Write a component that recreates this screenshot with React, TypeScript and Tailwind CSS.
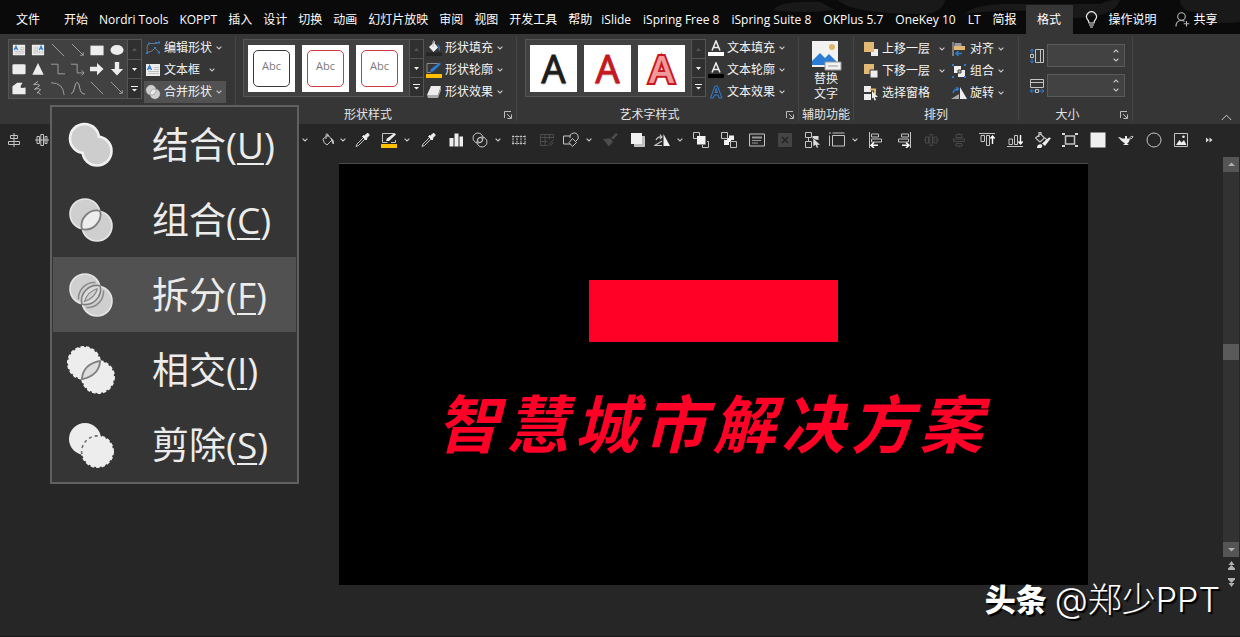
import React from "react";

type Kids = { children?: React.ReactNode };

const Svg = ({ s = 16, children }: Kids & { s?: number }) => (
  <svg width={s} height={s} viewBox="0 0 16 16" fill="none" stroke="#c4c4c4" strokeWidth="1" aria-hidden="true" className="shrink-0">
    {children}
  </svg>
);

const Chevron = () => (
  <svg width="6" height="4" viewBox="0 0 6 4" fill="none" stroke="#c8c8c8" strokeWidth="1.1" aria-hidden="true" className="shrink-0">
    <path d="M.6.6 3 3 5.400.6" />
  </svg>
);

const LENS = "M34.2 15.8A15.5 15.5 0 0 1 15.8 34.2A15.5 15.5 0 0 1 34.2 15.800";

const MergeIcon = ({ kind, size }: { kind: string; size: number }) => (
  <svg width={size} height={size} viewBox="0 0 50 50" fill="none" aria-hidden="true" className="shrink-0">
    {kind === "union" && (
      <>
        <g fill="#f0f0f0"><circle cx="18.500" cy="18.500" r="15.800" /><circle cx="31" cy="31" r="15.800" /></g>
        <g fill="#cdcdcd"><circle cx="18.500" cy="18.500" r="13.200" /><circle cx="31" cy="31" r="13.200" /></g>
      </>
    )}
    {kind === "combine" && (
      <>
        <g fill="#cfcfcf" stroke="#e6e6e6" strokeWidth="1.600"><circle cx="19" cy="19" r="15" /><circle cx="31" cy="31" r="15" /></g>
        <path d={LENS} fill="#ededed" stroke="#7e7e7e" strokeWidth="1.800" />
      </>
    )}
    {kind === "fragment" && (
      <>
        <g fill="#cfcfcf" stroke="#e6e6e6" strokeWidth="1.600"><circle cx="19" cy="19" r="15" /><circle cx="31" cy="31" r="15" /></g>
        <path d={LENS} fill="#dcdcdc" stroke="#7e7e7e" strokeWidth="1.600" />
        <path d="M29.500 12.500A16 16 0 0 0 12.500 29.500M37.500 20.500A16 16 0 0 1 20.500 37.500" stroke="#8a8a8a" strokeWidth="1.500" />
        <path d="M31.500 18.500Q29 28 18.500 31.500Q21 22 31.500 18.500" fill="#cfcfcf" stroke="#8a8a8a" strokeWidth="1.200" />
      </>
    )}
    {kind === "intersect" && (
      <>
        <g fill="#ededed" stroke="#ededed" strokeWidth="2" strokeDasharray="3.500 2"><circle cx="18" cy="18" r="16" /><circle cx="32" cy="32" r="16" /></g>
        <path d="M34.200 15.800Q33 31 15.800 34.200Q17 19 34.200 15.800" fill="#dcdcdc" stroke="#7e7e7e" strokeWidth="1.800" />
      </>
    )}
    {kind === "subtract" && (
      <>
        <circle cx="19" cy="19" r="16" fill="#ededed" />
        <circle cx="31.500" cy="31.500" r="15.500" fill="#ededed" stroke="#ededed" strokeWidth="2" strokeDasharray="3.500 2" />
        <path d="M15.800 34A16 16 0 0 1 34 16" stroke="#6e6e6e" strokeWidth="1.600" strokeDasharray="3 3" />
      </>
    )}
  </svg>
);

const Bucket = () => (
  <>
    <path d="m3 7 5-4 4 5-5 5Q3 11 3 7ZM6 7V2.500q1-1.500 2 0V5" />
    <path d="M11 6.500q3 1 2.500 5.500-1.500-1-1.500-3.500Z" fill="#e8e8e8" />
  </>
);

const Dropper = () => (
  <>
    <path d="M9.500 5.500 3 12l-1 2.500L4.500 13.500 11 7" />
    <path d="m8.500 4.500 3.500 3.500 1-1-.500-1L15 3.500q.500-2-2-2L10.500 4l-1-.500Z" fill="#eee" stroke="#eee" />
  </>
);

const TB: Record<string, React.ReactNode> = {
  alignCenter: <path d="M8 1v14M4.500 3.500h7v3h-7zM2.500 9.500h11v3h-11z" />,
  distribute: <path d="M1 8h14M3 4.500h2.500v7H3zM6.800 2.500h2.700v11H6.800zM11 4.500h2v7h-2z" />,
  bucket: <Bucket />,
  dropper: <Dropper />,
  outline: (
    <>
      <path d="M13 1.500H1.500v9h5M14.500 8v2.500H10" />
      <path d="m5 9 1-2.500L13.500 1 15 2.500 8 9Z" fill="#ededed" stroke="none" />
      <path d="M0 12h16v4H0z" fill="#ffc000" stroke="none" />
    </>
  ),
  bars: <path d="M1.500 6h4v8.500h-4zM6.500 1.500h4v13h-4zM11.500 4.500h3.500v10h-3.500z" fill="#ededed" stroke="none" />,
  circles: (
    <>
      <circle cx="6" cy="6" r="5" /><circle cx="10" cy="10" r="5" /><circle cx="8" cy="8" r="2.500" />
    </>
  ),
  grid: <path d="M2 3.500v9M6 3.500v9M10 3.500v9M14 3.500v9M1 4.500h14M1 11.500h14" strokeDasharray="2 .7" />,
  table: <path stroke="#4c4c4c" d="M1.500 2.500h13v4M1.500 2.500v11h7M1.500 5.500h13M1.500 9.500h7M6 2.500v11M10.500 2.500v5M9 13.500l5.500-6M11 14l3.500-4" />,
  shapes: <path d="M7.500 4H.5v8H7M7 6a4.200 4.200 0 1 1 6 3M9.500 6.500 13.500 10.500 9.500 14.500 6 10.500Z" />,
  brush: <path d="m1 7 6 7.500 4-5-3-3zM9 6l5-5L16 2.500l-5 5z" fill="#4d4d4d" stroke="none" />,
  copy: (
    <>
      <path d="M4.500 12v2.500h10v-10H12" fill="#bdbdbd" /><path d="M1 1h11v11H1z" fill="#f0f0f0" stroke="none" />
    </>
  ),
  rotate: (
    <>
      <path d="M9.500 2v12H16z" fill="#f0f0f0" stroke="none" /><path d="M8 9 .8 13.500H8M2 8q2-4 5.500-3M6 2.500l2 2.500-2 2" strokeWidth="1.200" />
    </>
  ),
  forward: (
    <>
      <path d="M4 6.500H.5v-6h6V4M14 9.500h1.500v6h-6V13" /><path d="M4 4h8.500v8.500H4z" fill="#f2f2f2" stroke="none" />
    </>
  ),
  backward: (
    <>
      <path d="M8 3.500h5V8H8zM3 8h5v5H3z" fill="#f2f2f2" stroke="none" /><path d="M6 6h4v4H6z" fill="#f2f2f2" stroke="none" /><path d="M.5.5h6v6h-6zM9.500 9.500h6v6h-6z" fill="#262626" />
    </>
  ),
  note: (
    <>
      <path d="M.5 2h15v12H.5z" /><path d="M3 4.500h10v2H3zM3 8h9v1H3zM3 10.500h6v1H3z" fill="#999" stroke="none" />
    </>
  ),
  close: (
    <>
      <path d="M1.500 1.500h13v13h-13z" fill="#444" stroke="#444" /><path d="m5 5 6 6M11 5l-6 6" stroke="#222" strokeWidth="1.500" />
    </>
  ),
  select: (
    <>
      <path d="M.5.5h6v5h-6zM.5 9.500h6v6h-6zM3.500 6v3" /><path d="M7.500 4h6v4l-6-1z" fill="#ddd" stroke="none" /><path d="m8 6 7.500 7h-3l1 2.500-2 .5-1-3-2.500 1.500z" fill="#ddd" stroke="#222" strokeWidth=".5" />
    </>
  ),
  frame: (
    <>
      <path d="M3.500 3.500h12v10.500h-12z" /><path d="M3.500 1h12M.5 3.500V14M0 1h2" />
    </>
  ),
  alignLeft: (
    <>
      <path d="M1.500 0v16M3.500 2h7v3h-7zM3.500 7h10v3h-10z" /><path d="M3 13.200h7M6 10.500 3 13.200 6 16" stroke="#fff" strokeWidth="1.500" />
    </>
  ),
  alignRight: (
    <>
      <path d="M14.500 0v16M5.500 2h7v3h-7zM2.500 7h10v3h-10z" /><path d="M6 13.200h7M10 10.500l3 2.700-3 2.800" stroke="#fff" strokeWidth="1.500" />
    </>
  ),
  distH: <path stroke="#484848" d="M1 8h1.500M14 8h1.500M2.500 5h3v6h-3zM6.800 2.500h2.700v11H6.800zM11 5h3v6h-3z" />,
  distV: <path stroke="#484848" d="M8 1v1M8 14v1.500M5 2.500h6v3H5zM2.500 7h11v2.500h-11zM5 11.500h6V14H5z" />,
  alignTop: (
    <>
      <path d="M0 1.500h16M2 3.500h3.500v6H2zM7.500 3.500h3v10h-3z" /><path d="M13.500 12V4M11.500 6.500 13.500 4l2.200 2.500" stroke="#fff" strokeWidth="1.400" />
    </>
  ),
  alignBottom: (
    <>
      <path d="M0 14.500h16M2 7h3.500v5.500H2zM7.500 3.500h3v9h-3z" /><path d="M13.500 3v9M11.500 9.500 13.500 12l2.200-2.500" stroke="#fff" strokeWidth="1.400" />
    </>
  ),
  paint: (
    <>
      <path d="m.5 6 5-4 4 4-4.500 4zM4 5V.5h2V3M10 6q2 1 1 3" strokeWidth="1.200" /><path d="m7 11.500 7-6 2 .5-6 8zM2 16q0-4.500 5-3.500 1 2-1 3.500z" fill="#ededed" stroke="none" />
    </>
  ),
  crop: (
    <>
      <path d="M3.500 4h9v8h-9z" strokeWidth="1.500" /><path d="M0 1h3v2H0zM13 1h3v2h-3zM0 13h3v2H0zM13 13h3v2h-3z" fill="#d8d8d8" stroke="none" />
    </>
  ),
  square: <path d="M.5.5h15v15H.5z" fill="#f0f0f0" stroke="none" />,
  lamp: (
    <>
      <path d="M0 5q3 0 4 1.500h3V4h2v2.500h3Q11 11 9 11.500L11 13H5l2-1.500Q3 9 0 5Z" fill="#ededed" stroke="none" /><path d="M11.500 7q3 0 3.500-2.500-2-1-3.500 1.500" />
    </>
  ),
  circle: <circle cx="8" cy="8" r="7" />,
  image: (
    <>
      <path d="M1.500 1.500h13v13h-13z" /><path d="m3 13 3.500-5 2 2.500L11 8l2.500 5Z" fill="#ededed" stroke="none" /><circle cx="10.500" cy="4.800" r="1.300" fill="#ededed" stroke="none" />
    </>
  ),
};

const Tool = ({ k, name }: { k: string; name: string }) => (
  <button type="button" aria-label={name} className="flex h-8 w-7 shrink-0 items-center justify-center">
    <Svg>{TB[k]}</Svg>
  </button>
);

const SplitTool = ({ k, name, tight }: { k: string; name: string; tight?: boolean }) => (
  <button type="button" aria-label={name} className="flex h-8 shrink-0 items-center">
    <span className="flex w-5 justify-center"><Svg>{TB[k]}</Svg></span>
    <span className={tight ? "flex w-[10px] justify-center" : "flex w-[15px] justify-center"}><Chevron /></span>
  </button>
);

const tabsList = ["开始", "Nordri Tools", "KOPPT", "插入", "设计", "切换", "动画", "幻灯片放映", "审阅", "视图", "开发工具", "帮助"];
const addInTabs = ["iSlide", "iSpring Free 8", "iSpring Suite 8", "OKPlus 5.7", "OneKey 10", "LT", "简报"];

const TitleTabs = () => (
  <header className="relative flex h-[34px] items-end overflow-hidden bg-[#0a0a0a]">
    <svg className="absolute top-0 right-0" width="480" height="34" viewBox="0 0 480 34" fill="#191919" aria-hidden="true">
      <path d="M205 14Q215 4 245 4H340Q355-2 360 0Q355 18 310 18Q270 6 205 14Z" />
      <path d="M13 10Q20 0 60 2L75 10Q40 14 13 10Z" />
      <path d="M78 0H185Q183 12 165 14Q90 14 78 0Z" />
      <path d="M420 0H480V22Q440 26 438 12Q420 12 420 0Z" />
    </svg>
    <nav className="relative flex h-[29px] items-center pl-4 text-[12px] whitespace-nowrap text-white">
      <button type="button" className="mr-6">文件</button>
      <div className="flex gap-[11px]">
        {tabsList.map((t) => <button type="button" key={t}>{t}</button>)}
      </div>
      <div className="ml-[9px] flex gap-3">
        {addInTabs.map((t) => <button type="button" key={t}>{t}</button>)}
      </div>
      <button type="button" aria-current="page" className="ml-[9px] h-full w-[47px] bg-[#363636]">格式</button>
      <button type="button" className="ml-3 flex items-center gap-[11px]">
        <svg width="13" height="17" viewBox="0 0 13 17" fill="none" stroke="#e8e8e8" strokeWidth="1.200" aria-hidden="true">
          <path d="M4 12Q4 10 2.500 8.500A4.900 4.900 0 1 1 10.500 8.500Q9 10 9 12ZM4 14h5M5 16h3" />
        </svg>
        操作说明
      </button>
      <button type="button" className="ml-[18px] flex items-center gap-1">
        <svg width="15" height="15" viewBox="0 0 15 15" fill="none" stroke="#b8b8b8" strokeWidth="1.100" aria-hidden="true">
          <circle cx="6.500" cy="4.500" r="3.800" /><path d="M1 14.500q0-6 5.500-6 2 0 3 1M11.500 9v5.500M8.700 11.700h5.600" />
        </svg>
        共享
      </button>
    </nav>
  </header>
);

const Sep = () => <div className="my-[3px] w-px shrink-0 bg-[#464646]" />;

const Launcher = ({ name }: { name: string }) => (
  <button type="button" aria-label={name} className="flex w-4 shrink-0 justify-center">
    <svg width="8" height="8" viewBox="0 0 8 8" fill="none" stroke="#bcbcbc" aria-hidden="true"><path d="M.5 7V.5H7M3 3l4 4M7.500 3.500v4h-4" /></svg>
  </button>
);

const Group = ({ label, launcher, w, pad = "", children }: Kids & { label: string; launcher?: boolean; w: string; pad?: string }) => (
  <section className={"flex shrink-0 flex-col justify-between pt-[2px] " + w}>
    <div className={"flex " + pad}>{children}</div>
    <div className="flex h-[18px] items-center text-[12px] leading-[18px] text-[#e4e4e4]">
      <span className="flex-1 text-center whitespace-nowrap">{label}</span>
      {launcher && <Launcher name={label + "选项"} />}
    </div>
  </section>
);

const RowBtn = ({ icon, text, active, wide, chevron = true }: { icon: React.ReactNode; text: string; active?: boolean; wide?: boolean; chevron?: boolean }) => (
  <button type="button" className={"flex h-[22px] items-center gap-[3px] pr-1 text-[12px] whitespace-nowrap text-[#f4f4f4] " + (active ? "bg-[#525252]" : "")}>
    <span className="flex w-[17px] justify-center">{icon}</span>
    {text}
    {chevron && <span className={wide ? "ml-[6px]" : "ml-px"}><Chevron /></span>}
  </button>
);

const Scroller = () => (
  <div className="flex w-[14px] flex-col divide-y divide-[#555] border-l border-[#555] bg-[#303030]">
    <button type="button" aria-label="上一行" className="flex flex-1 items-center justify-center"><svg width="5" height="3" viewBox="0 0 5 3" aria-hidden="true"><path d="M0 3 2.500 0 5 3Z" fill="#555" /></svg></button>
    <button type="button" aria-label="下一行" className="flex flex-1 items-center justify-center"><svg width="5" height="3" viewBox="0 0 5 3" aria-hidden="true"><path d="M0 0h5L2.500 3Z" fill="#eee" /></svg></button>
    <button type="button" aria-label="其他" className="flex flex-1 items-center justify-center"><svg width="7" height="6" viewBox="0 0 7 6" aria-hidden="true"><path d="M0 0h7v1H0zM1 3h5L3.500 5.500Z" fill="#eee" /></svg></button>
  </div>
);

const TextBoxIcon = ({ v }: { v?: boolean }) => (
  <>
    <path d="M1 2h14v12H1z" fill="#ededed" stroke="none" />
    <path d={v ? "M3.500 4v8M5.500 4v8M7.500 4v8M9.500 9v3M11.500 9v3M13.500 9v3" : "M9 5.500h5M9 7.500h5M3 9.500h11M3 11.500h11"} stroke="#b5b5b5" strokeWidth=".8" />
    <path d={v ? "M9.500 8 11.500 3.500 13.500 8M10.300 6.500h2.500" : "M2.500 8 4.500 3.500 6.500 8M3.300 6.500h2.500"} stroke="#2b7cd3" strokeWidth="1.300" />
  </>
);

const shapeIcons: React.ReactNode[] = [
  <TextBoxIcon />,
  <TextBoxIcon v />,
  <path d="M1 1l14 14" stroke="#a8a8a8" />,
  <path d="M1 1l13 13M14 10.500V14h-3.500" stroke="#a8a8a8" />,
  <path d="M.5 3h15v11H.5z" fill="#ededed" stroke="none" />,
  <ellipse cx="8" cy="8" rx="7.500" ry="5.800" fill="#ededed" stroke="none" />,
  <rect x=".5" y="2.500" width="15" height="11.500" rx="1.500" fill="#ededed" stroke="none" />,
  <path d="M8 1l6.500 13.500h-13z" fill="#ededed" stroke="none" />,
  <path d="M0 2.500h8v11h8" stroke="#a8a8a8" />,
  <path d="M0 2.500h7v10h8M12 9.500l3 3-3 3" stroke="#a8a8a8" />,
  <path d="M0 5.500h8V1l7.500 7L8 15v-4.500H0z" fill="#ededed" stroke="none" />,
  <path d="M5.500 0h5v8H15l-7 7.500L1 8h4.500z" fill="#ededed" stroke="none" />,
  <path d="M.5 15V6L6 2h6l-2 3.500q-1 3 2 2.500l3.500-.5V15z" fill="#ededed" stroke="none" />,
  <path d="M8 .5 3 4q5-1 7 1L4 9.500q5-2 7 .5l-4 3.500q2-1 4 2" stroke="#c0c0c0" />,
  <path d="M0 2q14 0 15 14" stroke="#a8a8a8" />,
  <path d="M0 14.500Q3 14 4 8 5 1.500 7 1.500T10 8q1 7 6 7" stroke="#b5b5b5" />,
  <path d="M1 1l14 14" stroke="#a8a8a8" />,
  <path d="M1 1l13 13M14 10.500V14h-3.500" stroke="#a8a8a8" />,
];

const glyphTones = [
  "text-[#1c1c1c] [-webkit-text-stroke:1px_#1c1c1c] [text-shadow:0_1px_2px_#0006]",
  "text-[#c8171e] [-webkit-text-stroke:1px_#c8171e] [text-shadow:0_1px_2px_#0006]",
  "text-[#f09a9c] font-semibold [paint-order:stroke] [-webkit-text-stroke:4px_#c8171e]",
];

const Ribbon = () => (
  <div className="flex h-[90px] bg-[#363636]">
    <section className="flex w-[235px] shrink-0 items-start pt-[2px] pl-2">
      <div className="mt-[3px] flex h-[60px] border border-[#555] bg-[#414141]">
        <div className="grid w-[118px] grid-cols-6 place-items-center">
          {shapeIcons.map((s, i) => <Svg key={i} s={14}>{s}</Svg>)}
        </div>
        <Scroller />
      </div>
      <div className="mt-px ml-[2px] flex flex-col">
        <RowBtn text="编辑形状" icon={<Svg><path d="M4 3.500h7l3-1M4 3.500Q1 6 2.500 12.500L7 11l3-3 4 4.500" stroke="#777" /><path d="M3 2.500h2v2H3zM10 2h2v2h-2zM13 1.500h2v2h-2zM1 12h2v2H1zM9 7h2v2H9zM13 11.500h2v2h-2z" fill="#2b7cd3" stroke="none" /></Svg>} />
        <RowBtn text="文本框" wide icon={<Svg><TextBoxIcon /></Svg>} />
        <RowBtn text="合并形状" active icon={<MergeIcon kind="combine" size={16} />} />
      </div>
    </section>
    <Sep />
    <Group label="形状样式" launcher w="w-[280px]" pad="pl-[7px]">
      <div className="mt-[3px] flex h-[58px] border border-[#555] bg-[#414141]">
        <div className="flex w-[165px] items-center gap-[7px] pl-1">
          {["border-[#3a3a3a]", "border-[#d33a3f]", "border-[#d33a3f]"].map((c, i) => (
            <button type="button" key={i} className="h-[47px] w-[47px] bg-white p-[5px]">
              <span className={"flex h-full items-center justify-center rounded-[5px] border pb-1 text-[11px] text-[#7a7a7a] " + c}>Abc</span>
            </button>
          ))}
        </div>
        <Scroller />
      </div>
      <div className="mt-px ml-px flex flex-col">
        <RowBtn text="形状填充" icon={<Svg><path d="m3 7 5-4.500 4 5-4.500 4.500z" fill="#ededed" stroke="none" /><path d="M7 7V1.500q1-1.500 1.500 0V4" /><path d="M11 4q3.500 1 3 7-2-1-1.500-4z" fill="#2b7cd3" stroke="none" /><path d="M0 12.500h16V16H0z" fill="#252525" stroke="none" /></Svg>} />
        <RowBtn text="形状轮廓" icon={<Svg><path d="M12 1.500H1v9h4" stroke="#8b8b8b" /><path d="m4 10 1-3 8.500-6.500L15 2 7 9.500Z" fill="#2b7cd3" stroke="none" /><path d="M0 12h16v4H0z" fill="#ffc000" stroke="none" /></Svg>} />
        <RowBtn text="形状效果" icon={<Svg><path d="M5 2h10l-3 9H1z" fill="#ededed" stroke="none" /><path d="M1 11h11v3H2zM12 11l3-9v4l-3 8z" fill="#aaa" stroke="none" /></Svg>} />
      </div>
    </Group>
    <Sep />
    <Group label="艺术字样式" launcher w="w-[281px]" pad="pl-2">
      <div className="mt-[3px] flex h-[58px] border border-[#555] bg-[#414141]">
        <div className="flex w-[165px] items-center gap-[7px] pl-1">
          {glyphTones.map((c) => (
            <button type="button" key={c} className={"h-[47px] w-[47px] bg-white text-center text-[38px] leading-[46px] " + c}>A</button>
          ))}
        </div>
        <Scroller />
      </div>
      <div className="mt-px ml-px flex flex-col">
        <RowBtn text="文本填充" icon={<Svg><path d="M4 10.500 8 1l4 9.500M5.500 7.500h5" stroke="#eee" strokeWidth="1.500" /><path d="M0 12h16v4H0z" fill="#fff" stroke="none" /></Svg>} />
        <RowBtn text="文本轮廓" icon={<Svg><path d="M4 10.500 8 1l4 9.500M5.500 7.500h5" stroke="#eee" strokeWidth="1.500" /><path d="M0 12h16v4H0z" fill="#000" stroke="none" /></Svg>} />
        <RowBtn text="文本效果" icon={<Svg><path d="M2.500 14 7 2h2.500L14 14h-3l-1-3H6.500l-1 3zM7 8.500h2.500L8.200 4.500z" stroke="#2f7fd4" /></Svg>} />
      </div>
    </Group>
    <Sep />
    <Group label="辅助功能" w="w-[54px]">
      <button type="button" className="flex w-full flex-col items-center pt-1 text-[12px] leading-[15px] text-[#efefef]">
        <svg width="32" height="31" viewBox="0 0 32 31" aria-hidden="true">
          <path d="M2 1h26v26H2z" fill="#f2f2f2" /><circle cx="22" cy="7" r="3" fill="#e3b567" />
          <path d="M2 25v-4l8-8 12 12zM15 18l4-4 9 9v2H22z" fill="#2b7cd3" /><path d="M15 22h16v8H15z" fill="#f2f2f2" stroke="#999" /><path d="M18 26h10" stroke="#999" />
        </svg>
        <span>替换<br />文字</span>
      </button>
    </Group>
    <Sep />
    <Group label="排列" w="w-[164px]" pad="pl-2">
      <div className="mt-[2px] flex flex-col items-start">
        <RowBtn text="上移一层" wide icon={<Svg><path d="M8 8h7v7H8z" fill="#eee" stroke="none" /><path d="M1 1h10v10H1z" fill="#e3b774" stroke="none" /></Svg>} />
        <RowBtn text="下移一层" wide icon={<Svg><path d="M1 1h10v10H1z" fill="#e3b774" stroke="none" /><path d="M7 7h8v8H7z" fill="#eee" stroke="#363636" /></Svg>} />
        <RowBtn text="选择窗格" chevron={false} icon={<Svg><path d="M1 1h7v6H1zM1 9h7v6H1z" fill="#eee" stroke="none" /><path d="M7 4.500h5v5" stroke="#e3b774" strokeWidth="2" /><path d="m9 6 6 6h-3l1 3-1.500.500-1-3-1.500 1z" fill="#eee" stroke="none" /></Svg>} />
      </div>
      <div className="mt-[2px] ml-px flex flex-col items-start">
        <RowBtn text="对齐" icon={<Svg><path d="M2 1v14" /><path d="M3.500 2h7v3.500h-7z" fill="#999" stroke="none" /><path d="M3 5h11v4H3z" fill="#e3b774" stroke="none" /><path d="M5 12.500h6M7.500 10 5 12.500 7.500 15" stroke="#2b7cd3" strokeWidth="1.600" /></Svg>} />
        <RowBtn text="组合" icon={<Svg><path d="M3 3h7v7H3zM7 7h7v7H7z" fill="#eee" stroke="none" /><path d="M7 7h3v3H7z" fill="#aaa" stroke="#444" /><path d="M1 1h2v2H1zM13 1h2v2h-2zM1 13h2v2H1zM13 13h2v2h-2z" fill="#2b7cd3" stroke="none" /></Svg>} />
        <RowBtn text="旋转" icon={<Svg><path d="M9 2v12h7z" fill="#eee" stroke="none" /><path d="M8 9v5H0z" fill="#aaa" stroke="none" /><path d="M2 8q1-4 5-4M5.500 2l2 2-2 2" stroke="#2b7cd3" strokeWidth="1.300" /></Svg>} />
      </div>
    </Group>
    <Sep />
    <Group label="大小" launcher w="w-[113px]" pad="pl-[10px]">
      <div className="flex flex-col gap-[7px] pt-2">
        {["高度", "宽度"].map((n, i) => (
          <div key={n} className="flex items-center gap-[2px]">
            <Svg>
              {i === 0 ? <><path d="M6.500 1.500h8v13h-8zM11.500 1.500v13" /><path d="M3 1v14M1 3.500 3 1l2 2.500M1 12.500 3 15l2-2.500" stroke="#2b7cd3" /><path d="M1.500 6.500h3v3h-3z" fill="#363636" /></>
                : <><path d="M1.500 1.500h13v8h-13zM1.500 4.500h13" /><path d="M1 13h14M3.500 11 1 13l2.500 2M12.500 11l2.500 2-2.500 2" stroke="#2b7cd3" /><path d="M6.500 11.500h3v3h-3z" fill="#363636" /></>}
            </Svg>
            <div className="flex h-[23px] w-[78px] border border-[#5a5a5a] bg-[#424242]">
              <input type="text" aria-label={n} className="w-0 flex-1 bg-transparent px-1 text-[12px] text-white outline-none" />
              <span className="flex w-4 flex-col items-center justify-around py-[2px]">
                <button type="button" aria-label={n + "增加"} className="flex rotate-180"><Chevron /></button>
                <button type="button" aria-label={n + "减少"} className="flex"><Chevron /></button>
              </span>
            </div>
          </div>
        ))}
      </div>
    </Group>
    <Sep />
    <button type="button" aria-label="折叠功能区" className="mb-[3px] ml-auto self-end pr-2">
      <svg width="11" height="7" viewBox="0 0 11 7" fill="none" stroke="#c8c8c8" aria-hidden="true"><path d="M.8 6 5.500 1.200 10.200 6" /></svg>
    </button>
  </div>
);

const QuickBar = () => (
  <div className="flex h-[33px] shrink-0 items-center bg-[#262626] pb-px">
    <div className="flex w-[318px] shrink-0 items-center">
      <Tool k="alignCenter" name="水平居中" />
      <Tool k="distribute" name="横向分布" />
      <button type="button" aria-label="更多" className="mr-[10px] ml-auto flex"><Chevron /></button>
    </div>
    <SplitTool k="bucket" name="填充" tight />
    <Tool k="dropper" name="取色器" />
    <div className="ml-[3px]"><SplitTool k="outline" name="轮廓" /></div>
    <Tool k="dropper" name="轮廓取色器" />
    <Tool k="bars" name="图表" />
    <SplitTool k="circles" name="合并形状" />
    <Tool k="grid" name="网格" />
    <Tool k="table" name="表格" />
    <SplitTool k="shapes" name="形状" />
    <Tool k="brush" name="格式刷" />
    <Tool k="copy" name="复制" />
    <SplitTool k="rotate" name="旋转" />
    <Tool k="forward" name="上移" />
    <Tool k="backward" name="下移" />
    <Tool k="note" name="备注" />
    <Tool k="close" name="删除" />
    <Tool k="select" name="选择窗格" />
    <SplitTool k="frame" name="边框" />
    <div className="grid w-[361px] shrink-0 grid-cols-13 place-items-center">
      {["alignLeft", "alignRight", "distH", "distV", "alignTop", "alignBottom", "paint", "crop", "square", "lamp", "circle", "image"].map((k) => <Tool key={k} k={k} name={k} />)}
      <button type="button" aria-label="更多命令">
        <svg width="7" height="6" viewBox="0 0 7 6" fill="#ddd" aria-hidden="true"><path d="M0 .5 3 3 0 5.500ZM3.500.5 6.500 3l-3 2.500Z" /></svg>
      </button>
    </div>
  </div>
);

const mergeItems = [
  { kind: "union", text: "结合", key: "U" },
  { kind: "combine", text: "组合", key: "C" },
  { kind: "fragment", text: "拆分", key: "F" },
  { kind: "intersect", text: "相交", key: "I" },
  { kind: "subtract", text: "剪除", key: "S" },
];

const MergeMenu = () => (
  <div role="menu" aria-label="合并形状" className="absolute top-[105px] left-[50px] z-10 w-[249px] border-2 border-[#606060] bg-[#353535] px-px">
    {mergeItems.map((m) => (
      <button type="button" role="menuitem" key={m.kind} className={"flex h-[75px] w-full items-center gap-9 pl-[13px] text-[37px] leading-none whitespace-nowrap text-[#ececec] " + (m.kind === "fragment" ? "bg-[#515151]" : "")}>
        <MergeIcon kind={m.kind} size={50} />
        <span>{m.text}(<span className="underline decoration-2 underline-offset-4">{m.key}</span>)</span>
      </button>
    ))}
  </div>
);

const Arrow = ({ d }: { d: string }) => (
  <svg width="9" height="9" viewBox="0 0 9 9" fill="#b0b0b0" aria-hidden="true"><path d={d} /></svg>
);

const ScrollRail = () => (
  <div className="flex w-[17px] shrink-0 flex-col items-start">
    <div className="flex h-[400px] w-4 flex-col items-stretch bg-[#323232]">
      <button type="button" aria-label="向上滚动" className="flex h-[15px] items-center justify-center bg-[#555]"><Arrow d="M1 6 4.500 2.500 8 6Z" /></button>
      <div className="flex flex-1 flex-col justify-center pb-[10px]"><div className="h-4 bg-[#5a5a5a]" /></div>
      <button type="button" aria-label="向下滚动" className="flex h-[15px] items-center justify-center bg-[#555]"><Arrow d="M1 3h7L4.500 6.500Z" /></button>
    </div>
    <button type="button" aria-label="上一张幻灯片" className="flex h-[17px] w-4 items-center justify-center"><Arrow d="M1.500 4 4.500 0l3 4zM1 7.500 4.500 4 8 7.500V9H1z" /></button>
    <button type="button" aria-label="下一张幻灯片" className="flex h-[17px] w-4 items-center justify-center"><Arrow d="M1 0h7v1.500L4.500 5 1 1.500zM1.500 5l3 4 3-4z" /></button>
  </div>
);

export default function App() {
  return (
    <div className="relative flex min-h-screen flex-col overflow-hidden border-b border-[#171717] bg-[#262626] font-['Open_Sans','Noto_Sans_CJK_SC',sans-serif]">
      <TitleTabs />
      <Ribbon />
      <QuickBar />
      <main className="flex flex-1">
        <div className="flex-1 pt-[6px] pr-[135px] pl-[339px]">
          <div className="flex aspect-[749/422] w-full flex-col items-center border-t border-[#4a4a4a] bg-black pt-[116px]">
            <div className="h-[62px] w-[249px] shrink-0 bg-[#ff0026]" />
            <h1 className="mt-[46px] flex gap-[6px] pr-2 text-[63px] leading-[72px] font-bold whitespace-nowrap text-[#ff0026] italic">
              {Array.from("智慧城市解决方案").map((c) => <span key={c}>{c}</span>)}
            </h1>
          </div>
        </div>
        <ScrollRail />
      </main>
      <MergeMenu />
      <p className="absolute right-5 bottom-4 flex items-center gap-2 font-['Inter','Noto_Sans_CJK_SC',sans-serif] text-[31px] leading-10 whitespace-nowrap text-white [text-shadow:2px_2px_1px_#000]">
        <span className="font-black">头条</span>
        <span className="text-[34px] font-light">@郑少PPT</span>
      </p>
    </div>
  );
}
